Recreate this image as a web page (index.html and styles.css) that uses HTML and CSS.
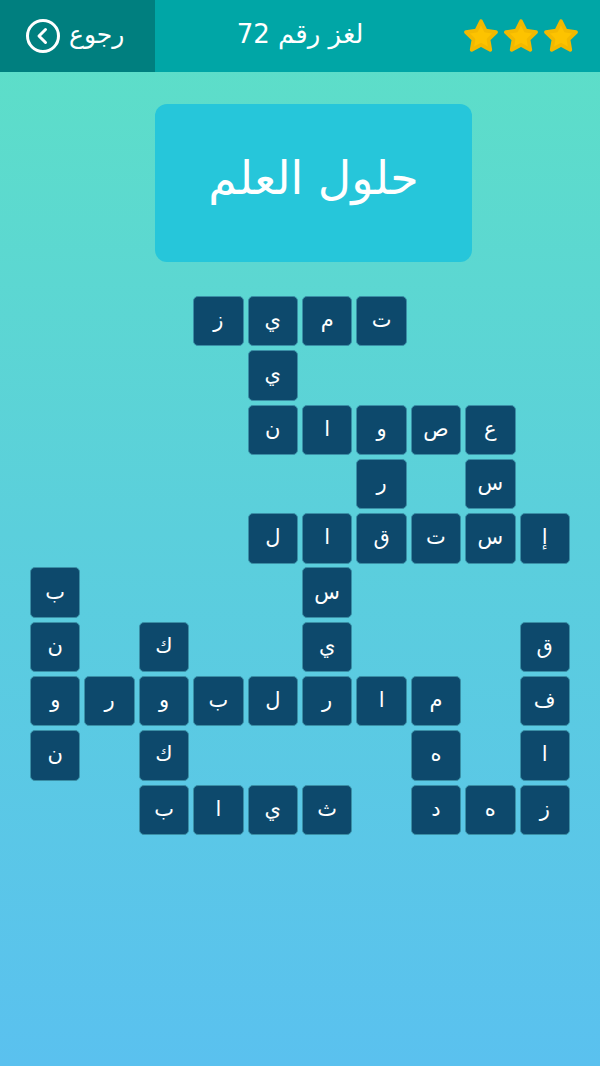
FILE: index.html
```html
<!DOCTYPE html>
<html lang="ar">
<head>
    <meta charset="UTF-8">
    <meta name="viewport" content="width=device-width, initial-scale=1.0">
    <title>لغز رقم 72</title>
    <link rel="stylesheet" href="styles.css">
</head>
<body>
    <div class="topbar">
        <a class="back" href="#">
            <svg class="back-icon" width="36" height="36" viewBox="0 0 36 36">
                <circle cx="18" cy="18" r="15.5" fill="none" stroke="#fff" stroke-width="3"/>
                <path d="M20.5 11.5 L14 18 L20.5 24.5" fill="none" stroke="#fff" stroke-width="3" stroke-linecap="round" stroke-linejoin="round"/>
            </svg>
            <span class="back-label">رجوع</span>
        </a>
        <div class="level-title">لغز رقم 72</div>
        <div class="stars">
            <svg class="star" viewBox="0 0 36 36"><polygon points="18,4 22.41,12.93 32.27,14.36 25.13,21.32 26.82,31.14 18,26.5 9.18,31.14 10.87,21.32 3.73,14.36 13.59,12.93"/></svg>
            <svg class="star" viewBox="0 0 36 36"><polygon points="18,4 22.41,12.93 32.27,14.36 25.13,21.32 26.82,31.14 18,26.5 9.18,31.14 10.87,21.32 3.73,14.36 13.59,12.93"/></svg>
            <svg class="star" viewBox="0 0 36 36"><polygon points="18,4 22.41,12.93 32.27,14.36 25.13,21.32 26.82,31.14 18,26.5 9.18,31.14 10.87,21.32 3.73,14.36 13.59,12.93"/></svg>
        </div>
    </div>

    <div class="clue">حلول العلم</div>

    <div class="board" id="board"></div>

    <script>
        // one string per row, left to right, "." = empty square
        const rows = [
            '...زيمت...',
            '....ي.....',
            '....ناوصع.',
            '......ر.س.',
            '....لاقتسإ',
            'ب....س....',
            'ن.ك..ي...ق',
            'وروبلرام.ف',
            'ن.ك....ه.ا',
            '..بايث.دهز'
        ];

        const board = document.getElementById('board');
        rows.forEach(row => {
            Array.from(row).forEach(ch => {
                const cell = document.createElement('div');
                if (ch === '.') {
                    cell.className = 'cell empty';
                } else {
                    cell.className = 'cell';
                    cell.textContent = ch;
                }
                board.appendChild(cell);
            });
        });
    </script>
</body>
</html>
```

FILE: styles.css
```css
* {
    margin: 0;
    padding: 0;
    box-sizing: border-box;
}

html, body {
    height: 100%;
}

body {
    font-family: 'DejaVu Sans', 'Noto Sans', sans-serif;
    background: linear-gradient(180deg, #5de0c6 0%, #5bcfdc 50%, #5ac1ef 100%);
    min-height: 1066px;
    color: #fff;
}

.topbar {
    display: grid;
    grid-template-columns: 155px 1fr 155px;
    height: 72px;
    background: #00a6a6;
    direction: ltr;
}

.back {
    display: flex;
    align-items: center;
    gap: 8px;
    padding-left: 25px;
    background: #007f7f;
    color: #fff;
    text-decoration: none;
}

.back-icon {
    display: block;
}

.back-label {
    font-size: 25px;
    line-height: 1;
    margin-top: -4px;
}

.level-title {
    display: flex;
    align-items: center;
    justify-content: center;
    font-size: 26px;
    margin-top: -4px;
}

.stars {
    display: flex;
    align-items: center;
    justify-content: flex-end;
    gap: 2px;
    padding-right: 20px;
}

.star {
    width: 38px;
    height: 38px;
    display: block;
}

.star polygon {
    fill: #fdc300;
    stroke: #f3b900;
    stroke-width: 3.5;
    stroke-linejoin: round;
}

.clue {
    width: 317px;
    height: 158px;
    margin: 32px 0 0 155px;
    background: #26c6da;
    border-radius: 12px;
    display: flex;
    align-items: center;
    justify-content: center;
    font-size: 46px;
    padding-bottom: 10px;
}

.board {
    display: grid;
    grid-template-columns: repeat(10, 1fr);
    grid-auto-rows: 50.4px;
    gap: 3.9px;
    width: 540px;
    margin: 34px auto 0;
    direction: ltr;
}

.cell {
    background: #0d496c;
    border: 1px solid #3a8fa6;
    border-radius: 5px;
    display: flex;
    align-items: center;
    justify-content: center;
    font-size: 21px;
    color: #fff;
    padding-bottom: 2px;
}

.cell.empty {
    background: none;
    border: none;
}
```
